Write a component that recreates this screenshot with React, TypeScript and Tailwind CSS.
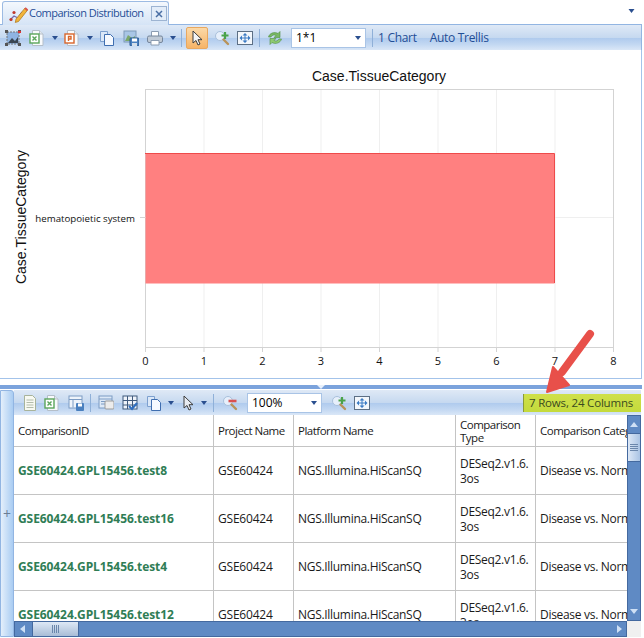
import React from "react";

const font = { fontFamily: '"Open Sans", "Noto Sans", sans-serif' };
const chartFont = { fontFamily: '"Liberation Sans", Arial, sans-serif' };

const S = ({ children, w = 16, h = 16, cls = "" }: { children: React.ReactNode; w?: number; h?: number; cls?: string }) => (
  <svg width={w} height={h} viewBox={`0 0 ${w} ${h}`} className={`shrink-0 ${cls}`}>{children}</svg>
);

const Caret = ({ cls = "" }: { cls?: string }) => (
  <svg width="6" height="4" viewBox="0 0 6 4" className={`shrink-0 ${cls}`}><path d="M0 0h6L3 4z" fill="#2a4f8f" /></svg>
);
const Sep = ({ cls = "" }: { cls?: string }) => <div className={`w-px h-[18px] bg-[#8fb0d8] shrink-0 ${cls}`} />;

const Doc = ({ tint, letter }: { tint: string; letter: string }) => (
  <S>
    <path d="M3.5 .5h7l3.5 3.5v11.5H3.5z" fill="#f8fafc" stroke="#b4bec9" />
    <path d="M10.5 .5V4H14" fill="#e3e9f0" stroke="#b4bec9" />
    <rect x="1" y="4" width="9" height="9" fill="#fff" stroke={tint} strokeWidth="1.4" />
    <path d={letter} stroke={tint} strokeWidth="1.4" fill="none" />
  </S>
);
const Copy = () => (
  <S>
    <path d="M1.5 1.5h7v10h-7z" fill="#dbe8f8" stroke="#7da0cf" />
    <path d="M5.5 4.5h6l3 3v8h-9z" fill="#f5f9ff" stroke="#3f6eb0" />
  </S>
);
const SaveImg = () => (
  <S>
    <rect x="1" y="1" width="12" height="11" fill="#a9c6e6" stroke="#7f9ab8" />
    <path d="M2 11l3-6 4 3 3-2v5z" fill="#7aa86a" />
    <rect x="7" y="8" width="9" height="8" rx="1" fill="#4a80bf" stroke="#2b5a94" />
    <rect x="9" y="8.5" width="5" height="3" fill="#fff" />
    <rect x="9" y="13" width="5" height="3" fill="#d4dfeb" />
  </S>
);
const Print = () => (
  <S>
    <path d="M4.5 1.5h7v5h-7z" fill="#fff" stroke="#8c9db2" />
    <rect x="0.5" y="6" width="15" height="6.5" rx="1.5" fill="#c0cad6" stroke="#76879c" />
    <path d="M4 10.5h8v4.5H4z" fill="#fff" stroke="#8c9db2" />
  </S>
);
const Cursor = ({ gray }: { gray?: boolean }) => (
  <S>
    <path d="M4 1v12l3-2.5 2 4.5 2-1-2-4.3h4z" fill={gray ? "#e8ecf2" : "#f5f5f5"} stroke="#3d3d3d" strokeLinejoin="round" />
  </S>
);
const Magnify = ({ plus }: { plus: boolean }) => (
  <S>
    <circle cx="6" cy="6" r="4.5" fill="#e6effb" stroke="#a9c0db" />
    <path d="M9.5 9.5l4.5 4.5" stroke="#b8935a" strokeWidth="2.4" strokeLinecap="round" />
    {plus ? (
      <path d="M11 2v7M7.5 5.5h7" stroke="#4aa34a" strokeWidth="2.2" />
    ) : (
      <path d="M6.5 6h8" stroke="#d95050" strokeWidth="2.6" />
    )}
  </S>
);
const Fit = () => (
  <S>
    <rect x="0.5" y="1.5" width="15" height="13" fill="#f3f7fc" stroke="#5c6f85" />
    <path d="M5 8h6M8 5v6" stroke="#3b7bc4" strokeWidth="1" />
    <path d="M2.5 8l2.5-2.5v5zM13.5 8L11 5.5v5zM8 3L5.5 5.5h5zM8 13l-2.5-2.5h5z" fill="#3b7bc4" />
  </S>
);
const Refresh = () => (
  <S>
    <path d="M1.5 7C2.5 3 7.5 1.5 11 3.5L13 1.5V7.5H7L9 5.5C7 4.5 5 5 4 7z" fill="#79b864" stroke="#4f8f3f" strokeWidth=".6" />
    <path d="M14.5 9C13.5 13 8.5 14.5 5 12.5L3 14.5V8.5H9L7 10.5C9 11.5 11 11 12 9z" fill="#8fca72" stroke="#4f8f3f" strokeWidth=".6" />
  </S>
);
const ChartImg = () => (
  <S>
    <rect x="2" y="2" width="12" height="12" fill="#8fb4e2" stroke="#777" strokeDasharray="2 1" />
    <path d="M3 13l4-5 3 3 3-4v6z" fill="#3a4652" />
    <path d="M0 0h3v3H0zM13 0h3v3h-3zM0 13h3v3H0zM13 13h3v3h-3z" fill="#555" />
    <path d="M13 1h3v2h-3z" fill="#d33" />
  </S>
);
const TabIcon = () => (
  <S w={20} h={18}>
    <path d="M1 15l4-4 4 2 4-6" stroke="#7b6aa8" strokeWidth="1.3" fill="none" />
    <circle cx="2" cy="14.5" r="1.6" fill="#c0392b" />
    <circle cx="5" cy="7.5" r="1.6" fill="#c0392b" />
    <path d="M7 14L16 3l2.5 2.2L9.5 16.5l-3.2 1z" fill="#f2b53a" stroke="#a8741a" strokeWidth=".7" />
    <path d="M16 3l2.5 2.2" stroke="#d9534f" strokeWidth="2" />
  </S>
);
const PlainDoc = () => (
  <S>
    <path d="M2.5 .5h8l3 3v12h-11z" fill="#f7f9f2" stroke="#a8b39a" />
    <path d="M4.5 5h7M4.5 7.5h7M4.5 10h7M4.5 12.5h7" stroke="#b3bcab" />
  </S>
);
const SaveTable = () => (
  <S>
    <rect x="1" y="1" width="13" height="12" fill="#eef4fb" stroke="#7c9cc4" />
    <path d="M1 4.5h13M5 4.5v8" stroke="#7c9cc4" />
    <rect x="8" y="8" width="8" height="8" rx="1" fill="#4a80bf" />
    <rect x="10" y="8.5" width="4" height="3" fill="#fff" />
  </S>
);
const ColChooser = () => (
  <S>
    <rect x="1" y="1" width="13" height="12" fill="#dde9f7" stroke="#7c9cc4" />
    <path d="M1 4h13M3 6.5h6M3 9h6" stroke="#7c9cc4" />
    <rect x="7" y="6" width="9" height="8" rx="1" fill="#ececec" stroke="#9b9b9b" />
  </S>
);
const GridCheck = () => (
  <S>
    <rect x="1" y="1" width="14" height="13" fill="#eef3fa" stroke="#3f5a7d" />
    <path d="M1 5.5h14M1 10h14M5.5 1v13M10.5 1v13" stroke="#3f5a7d" />
    <path d="M7 11l3 3 5-6" stroke="#2f6fc0" strokeWidth="2" fill="none" />
  </S>
);

const barGradient = "bg-[linear-gradient(to_bottom,#dfe9f6_0%,#c6d9f0_50%,#adc9ed_50%,#c3d8f2_78%,#dae7f7_100%)]";

const Combo = ({ text, w }: { text: string; w: string }) => (
  <div className={`${w} h-[20px] bg-white border border-[#a9c4e6] flex items-center justify-between pl-[4px] pr-[4px] text-[12px] text-black shrink-0`}>
    <span>{text}</span>
    <Caret />
  </div>
);

const rows = ["GSE60424.GPL15456.test8", "GSE60424.GPL15456.test16", "GSE60424.GPL15456.test4", "GSE60424.GPL15456.test12"];
const cell = "border-r border-b border-[#c4c4c4] flex items-center pl-[4px] pt-[1px] overflow-hidden whitespace-nowrap";
const head = "text-[11.5px] tracking-[-0.5px]";

const Chart = () => {
  const xs = [0, 1, 2, 3, 4, 5, 6, 7, 8];
  const X = (v: number) => 145 + v * 58.5;
  return (
    <svg width="640" height="328" viewBox="0 50 640 328" className="block" style={font}>
      <text x="379" y="81" textAnchor="middle" fontSize="14" fill="#111" style={chartFont}>Case.TissueCategory</text>
      <text transform="translate(26 217) rotate(-90)" textAnchor="middle" fontSize="14" fill="#111" style={chartFont}>Case.TissueCategory</text>
      <rect x="145.5" y="89.5" width="468" height="258" fill="#fff" stroke="#d3d3d3" />
      {xs.slice(1, -1).map((v) => (
        <line key={v} x1={X(v) + 0.5} x2={X(v) + 0.5} y1="90" y2="347" stroke="#efefef" />
      ))}
      <line x1="145" x2="613" y1="217.5" y2="217.5" stroke="#efefef" />
      <rect x="145.5" y="153.5" width="409" height="130" fill="#ff8080" />
      <path d="M145 153.5H554.5V283" fill="none" stroke="#ee4a4a" />
      <line x1="140" x2="145" y1="217.5" y2="217.5" stroke="#d3d3d3" />
      {xs.map((v) => (
        <g key={v}>
          <line x1={X(v) + 0.5} x2={X(v) + 0.5} y1="347" y2="352" stroke="#d3d3d3" />
          <text x={X(v) + 0.5} y="365" textAnchor="middle" fontSize="11" fill="#111">{v}</text>
        </g>
      ))}
      <text x="135" y="222" textAnchor="end" fontSize="9.7" fill="#111">hematopoietic system</text>
    </svg>
  );
};

export default function App() {
  return (
    <div className="relative w-[644px] h-[638px] bg-white overflow-hidden flex flex-col" style={font}>
      {/* Tab strip */}
      <div className="h-[25px] shrink-0 flex items-end justify-between border-b border-[#92b5e2] w-[642px]">
        <div className="ml-[2px] w-[167px] h-[24px] -mb-px border border-[#9dbbe3] border-b-0 rounded-t-[3px] bg-[linear-gradient(to_bottom,#f4f8fd,#d5e4f6)] flex items-center pl-[6px]">
          <TabIcon />
          <span className="text-[11px] tracking-[-0.5px] text-[#1f4e96] whitespace-nowrap">Comparison Distribution</span>
          <div className="ml-auto mr-[1px] w-[16px] h-[15px] border border-[#9db4d2] bg-[#e3edf9] flex items-center justify-center">
            <svg width="8" height="8" viewBox="0 0 8 8"><path d="M1 1l6 6M7 1L1 7" stroke="#4a6fa5" strokeWidth="1.5" /></svg>
          </div>
        </div>
        <Caret cls="mb-[11px] mr-[7px] w-[7px]" />
      </div>

      {/* Main toolbar */}
      <div className={`h-[25px] shrink-0 w-[642px] border-r border-[#92b5e2] flex items-center pl-[5px] ${barGradient}`}>
        <ChartImg />
        <div className="ml-[8px]"><Doc tint="#5aa55a" letter="M3.5 6.5l4 4M7.5 6.5l-4 4" /></div>
        <Caret cls="ml-[7px]" />
        <div className="ml-[6px]"><Doc tint="#d9662b" letter="M4.5 11V6.5h2.5v2.5H4.5" /></div>
        <Caret cls="ml-[7px]" />
        <div className="ml-[6px]"><Copy /></div>
        <div className="ml-[8px]"><SaveImg /></div>
        <div className="ml-[8px]"><Print /></div>
        <Caret cls="ml-[7px]" />
        <Sep cls="ml-[5px]" />
        <div className="ml-[4px] w-[22px] h-[22px] border border-[#e8a860] bg-[linear-gradient(to_bottom,#fbd9a8,#f6b468)] rounded-[2px] flex items-center justify-center"><Cursor /></div>
        <div className="ml-[6px]"><Magnify plus /></div>
        <div className="ml-[7px]"><Fit /></div>
        <Sep cls="ml-[6px]" />
        <div className="ml-[7px]"><Refresh /></div>
        <div className="ml-[8px]"><Combo text="1*1" w="w-[75px]" /></div>
        <Sep cls="ml-[6px]" />
        <span className="ml-[5px] text-[12px] tracking-[-0.3px] text-[#1f4e96] whitespace-nowrap">1 Chart</span>
        <span className="ml-[13px] text-[12px] tracking-[-0.3px] text-[#1f4e96] whitespace-nowrap">Auto Trellis</span>
      </div>

      {/* Chart panel */}
      <div className="h-[329px] shrink-0 w-[642px] border-r border-b border-[#a3c3ea] bg-white">
        <Chart />
      </div>

      {/* Splitter */}
      <div className="h-[6px] shrink-0" />
      <div className="h-[4px] shrink-0 w-[642px] bg-[#7ba3dc] relative flex justify-center">
        <svg width="8" height="4" viewBox="0 0 8 4"><path d="M0 0h8L4 4z" fill="#e8f0fb" /></svg>
      </div>

      {/* Lower area */}
      <div className="flex-1 min-h-0 flex w-[644px] mt-[1px]">
        {/* Left strip */}
        <div className="w-[14px] h-[247px] shrink-0 border border-[#92b5e2] rounded-tr-[3px] bg-[linear-gradient(to_right,#e4effb,#a9ccf2)] flex items-center justify-center text-[14px] text-[#6b7c93]">+</div>

        <div className="flex-1 min-w-0 flex flex-col">
          {/* Grid toolbar */}
          <div className={`h-[25px] shrink-0 w-[627px] flex items-center pl-[8px] ${barGradient}`}>
            <PlainDoc />
            <div className="ml-[6px]"><Doc tint="#5aa55a" letter="M3.5 6.5l4 4M7.5 6.5l-4 4" /></div>
            <div className="ml-[8px]"><SaveTable /></div>
            <Sep cls="ml-[6px]" />
            <div className="ml-[7px]"><ColChooser /></div>
            <div className="ml-[8px]"><GridCheck /></div>
            <div className="ml-[8px]"><Copy /></div>
            <Caret cls="ml-[6px]" />
            <div className="ml-[6px]"><Cursor gray /></div>
            <Caret cls="ml-[5px]" />
            <Sep cls="ml-[6px]" />
            <div className="ml-[8px]"><Magnify plus={false} /></div>
            <div className="ml-[9px]"><Combo text="100%" w="w-[75px]" /></div>
            <div className="ml-[9px]"><Magnify plus /></div>
            <div className="ml-[7px]"><Fit /></div>
            <div className="ml-auto w-[118px] h-[18px] border-l border-[#8a9a3a] bg-[linear-gradient(to_bottom,#cfe04a,#c4da3c)] flex items-center pl-[5px] text-[11.5px] text-[#3a4a20] whitespace-nowrap tracking-[-0.18px]">7 Rows, 24 Columns</div>
          </div>

          {/* Table + vertical scroll */}
          <div className="h-[206px] shrink-0 flex">
            <div className="w-[613px] shrink-0 overflow-hidden text-[12px] tracking-[-0.3px] text-[#1a1a1a]">
              <div className="grid grid-cols-[200px_80px_162px_80px_120px] w-[642px] grid-rows-[32px_48px_48px_48px_48px]">
                <div className={`${cell} ${head}`}>ComparisonID</div>
                <div className={`${cell} ${head}`}>Project Name</div>
                <div className={`${cell} ${head}`}>Platform Name</div>
                <div className={`${cell} ${head} leading-[13px]`}>Comparison<br />Type</div>
                <div className={`${cell} ${head}`}>Comparison Category</div>
                {rows.map((r) => (
                  <React.Fragment key={r}>
                    <div className={`${cell} font-bold tracking-[-0.08px] text-[#2f7d55]`}>{r}</div>
                    <div className={`${cell} tracking-[-0.2px]`}>GSE60424</div>
                    <div className={cell}>NGS.Illumina.HiScanSQ</div>
                    <div className={`${cell} leading-[15px]`}>DESeq2.v1.6.<br />3os</div>
                    <div className={cell}>Disease vs. Normal</div>
                  </React.Fragment>
                ))}
              </div>
            </div>
            <div className="w-[14px] shrink-0 bg-[#5f8ac4] border border-[#44699f] flex flex-col items-center justify-between pt-[6px] pb-[6px] relative">
              <svg width="8" height="5" viewBox="0 0 8 5"><path d="M4 0l4 5H0z" fill="#cfe0f5" /></svg>
              <div className="absolute top-[17px] left-0 right-0 h-[29px] bg-[linear-gradient(to_right,#dde8f6,#aac4e4)] border-y border-[#44699f] flex flex-col items-center justify-center gap-[1px]">
                <div className="w-[8px] h-px bg-[#6b87ab]" />
                <div className="w-[8px] h-px bg-[#6b87ab]" />
                <div className="w-[8px] h-px bg-[#6b87ab]" />
                <div className="w-[8px] h-px bg-[#6b87ab]" />
              </div>
              <svg width="8" height="5" viewBox="0 0 8 5"><path d="M0 0h8L4 5z" fill="#cfe0f5" /></svg>
            </div>
          </div>

          {/* Horizontal scroll */}
          <div className="h-[16px] shrink-0 flex">
            <div className="w-[613px] shrink-0 bg-[#5f8ac4] border border-[#44699f] flex items-center justify-between pl-[5px] pr-[4px] relative">
              <svg width="5" height="8" viewBox="0 0 5 8"><path d="M5 0v8L0 4z" fill="#cfe0f5" /></svg>
              <div className="absolute left-[17px] top-0 bottom-0 w-[47px] bg-[linear-gradient(to_bottom,#dde8f6,#a9bdd6)] border-x border-[#44699f] flex items-center justify-center gap-[1px]">
                <div className="w-px h-[8px] bg-[#6b87ab]" />
                <div className="w-px h-[8px] bg-[#6b87ab]" />
                <div className="w-px h-[8px] bg-[#6b87ab]" />
                <div className="w-px h-[8px] bg-[#6b87ab]" />
              </div>
              <svg width="5" height="8" viewBox="0 0 5 8"><path d="M0 0v8l5-4z" fill="#cfe0f5" /></svg>
            </div>
            <div className="w-[14px] shrink-0 bg-[#f0f0f0]" />
          </div>
        </div>
      </div>

      {/* Annotation arrow */}
      <svg width="60" height="72" viewBox="0 0 60 72" className="absolute left-[542px] top-[326px]">
        <path d="M48 8L20 46" stroke="#e8504a" strokeWidth="8" strokeLinecap="round" />
        <path d="M5 66L11 41 27 59z" fill="#e8504a" stroke="#e8504a" strokeWidth="2" strokeLinejoin="round" />
      </svg>
    </div>
  );
}
